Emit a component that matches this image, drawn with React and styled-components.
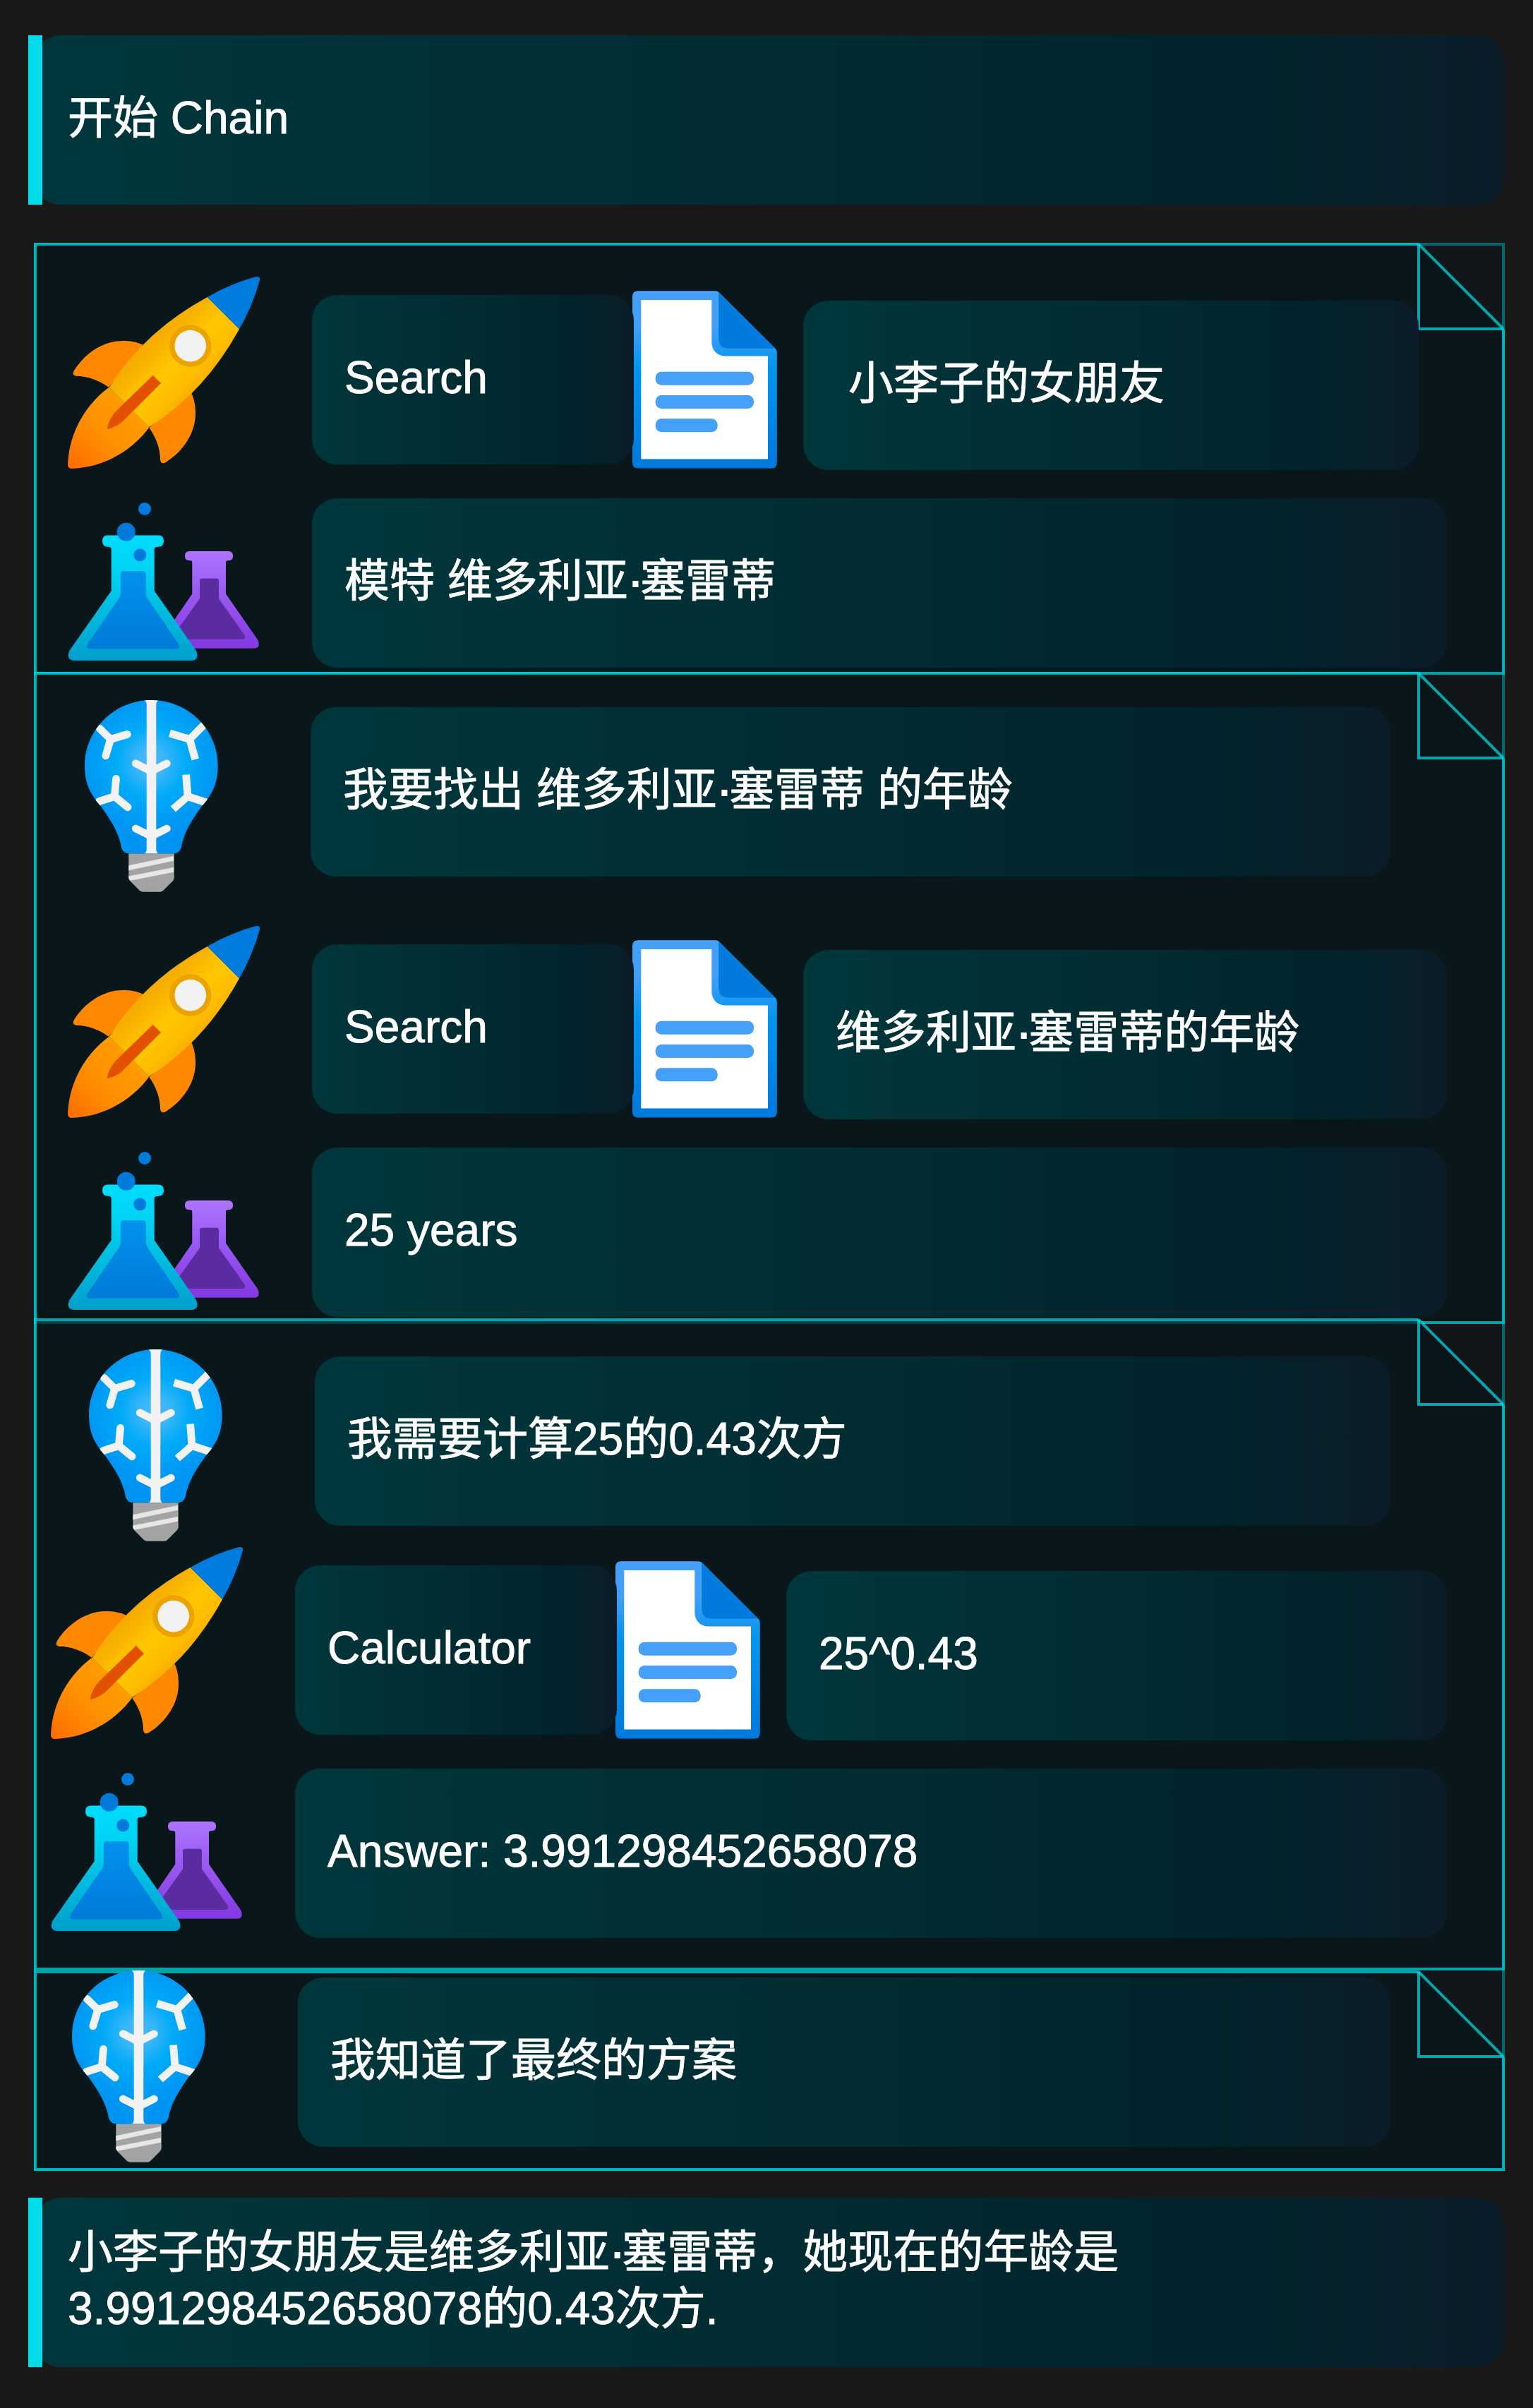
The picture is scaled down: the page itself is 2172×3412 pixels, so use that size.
import React from "react";
import styled, { createGlobalStyle } from "styled-components";

const GlobalStyle = createGlobalStyle`
  body {
    margin: 0;
    background: #191919;
  }
`;

const STROKE = "rgba(0, 221, 232, 0.7)";

const Page = styled.main`
  box-sizing: border-box;
  width: 2172px;
  height: 3412px;
  padding: 50px 42px 58px 50px;
  display: flex;
  flex-direction: column;
  background: #191919;
  color: #fff;
  font-family: "Liberation Sans", Helvetica, "Noto Sans CJK SC", sans-serif;
  font-size: 64px;
  line-height: 80px;
  -webkit-text-stroke: 0.9px #fff;
`;

const Card = styled.div`
  box-sizing: border-box;
  position: relative;
  z-index: 1;
  flex: none;
  display: flex;
  align-items: center;
  width: ${(p) => p.$w}px;
  height: 240px;
  margin-top: ${(p) => p.$drop || 0}px;
  padding: 0 0 ${(p) => p.$lift ?? 7}px ${(p) => p.$pad || 46}px;
  border-radius: 36px;
  background: linear-gradient(90deg, #00373c 0%, #012d33 45%, #02232b 84%, #081f2a 94%, #0b1c29 100%);
  white-space: pre;
`;

const Banner = styled(Card)`
  &::before {
    content: "";
    position: absolute;
    left: -10px;
    top: 0;
    width: 20px;
    height: 100%;
    background: #00dde8;
  }
`;

const Chain = styled.section`
  box-sizing: border-box;
  position: relative;
  width: 2080px;
  height: 2728px;
  margin: 56px 0 40px;
  display: flex;
  flex-direction: column;
  background: #111718;
  &::before {
    content: "";
    position: absolute;
    inset: -2px;
    border: 4px solid #02686e;
  }
`;

const Note = styled.article`
  box-sizing: border-box;
  position: relative;
  flex: none;
  height: ${(p) => p.$h}px;
  margin-top: ${(p) => p.$shift || 0}px;
  padding-top: ${(p) => p.$top}px;
  display: flex;
  flex-direction: column;
  &::before {
    content: "";
    position: absolute;
    inset: 0;
    background: rgba(5, 23, 27, 0.7);
    clip-path: polygon(0 0, calc(100% - 120px) 0, 100% 120px, 100% 100%, 0 100%);
  }
  &::after {
    content: "";
    position: absolute;
    inset: -2px;
    background:
      linear-gradient(${STROKE}, ${STROKE}) 0 0 / calc(100% - 122px) 4px no-repeat,
      linear-gradient(${STROKE}, ${STROKE}) 0 4px / 4px calc(100% - 8px) no-repeat,
      linear-gradient(${STROKE}, ${STROKE}) 100% 100% / 4px calc(100% - 122px) no-repeat,
      linear-gradient(${STROKE}, ${STROKE}) 0 100% / calc(100% - 4px) 4px no-repeat;
  }
`;

const FoldMark = styled.svg`
  position: absolute;
  right: -2px;
  top: -2px;
  width: 124px;
  height: 124px;
  z-index: 0;
`;

const Row = styled.div`
  position: relative;
  z-index: 1;
  flex: none;
  display: flex;
  align-items: flex-start;
  height: ${(p) => p.$h}px;
  margin-top: ${(p) => p.$gap || 0}px;
  padding-left: ${(p) => p.$indent}px;
`;

const Art = styled.svg`
  flex: none;
  display: block;
  overflow: visible;
  width: ${(p) => p.$w}px;
  height: ${(p) => p.$h}px;
  margin: ${(p) => p.$drop || 0}px ${(p) => p.$after || 0}px 0 ${(p) => p.$before || 0}px;
`;

const Line = styled.span`
  display: block;
`;

const Dot = styled.span`
  letter-spacing: -4px;
  -webkit-text-stroke-width: 2px;
`;

const HiddenDefs = styled.svg`
  position: absolute;
`;

function Fold() {
  return (
    <FoldMark viewBox="0 0 124 124">
      <path d="M2 2V122H122Z" fill="rgba(8,20,23,.25)" />
      <path d="M2 2V122H122" fill="none" stroke="#00dde8" strokeOpacity=".72" strokeWidth="4" />
      <path d="M2 2L122 122" fill="none" stroke="#00dde8" strokeOpacity=".72" strokeWidth="4" />
    </FoldMark>
  );
}

function Defs() {
  return (
    <HiddenDefs width="0" height="0">
      <defs>
        <linearGradient id="hull" gradientUnits="userSpaceOnUse" x1="112" y1="80" x2="192" y2="160">
          <stop offset="0" stopColor="#f2a600" />
          <stop offset=".25" stopColor="#f9b400" />
          <stop offset=".52" stopColor="#ffc800" />
          <stop offset=".8" stopColor="#ffbb00" />
          <stop offset="1" stopColor="#f2ab00" />
        </linearGradient>
        <linearGradient id="flame" gradientUnits="userSpaceOnUse" x1="95" y1="175" x2="0" y2="270">
          <stop offset="0" stopColor="#ff9f00" />
          <stop offset=".5" stopColor="#ff9000" />
          <stop offset="1" stopColor="#ff6c00" />
        </linearGradient>
        <linearGradient id="glass" x1="0" y1="0" x2="0" y2="1">
          <stop offset="0" stopColor="#00dcff" />
          <stop offset=".25" stopColor="#00d4f4" />
          <stop offset=".8" stopColor="#00aed6" />
          <stop offset="1" stopColor="#009fca" />
        </linearGradient>
        <linearGradient id="liquid" x1="0" y1="0" x2="0" y2="1">
          <stop offset="0" stopColor="#0092ec" />
          <stop offset="1" stopColor="#007adb" />
        </linearGradient>
        <linearGradient id="violet" x1="0" y1="0" x2="0" y2="1">
          <stop offset="0" stopColor="#ad74ff" />
          <stop offset="1" stopColor="#8338e2" />
        </linearGradient>
        <linearGradient id="paper" x1="0" y1="0" x2="0" y2="1">
          <stop offset="0" stopColor="#45a0f9" />
          <stop offset=".2" stopColor="#449ff8" />
          <stop offset=".44" stopColor="#0095ee" />
          <stop offset="1" stopColor="#0079dd" />
        </linearGradient>
        <radialGradient id="glow" gradientUnits="userSpaceOnUse" cx="94" cy="88" r="98">
          <stop offset="0" stopColor="#48b8f9" />
          <stop offset=".2" stopColor="#3cb6f9" />
          <stop offset=".5" stopColor="#00abf8" />
          <stop offset=".75" stopColor="#00a0f6" />
          <stop offset="1" stopColor="#0095f3" />
        </radialGradient>
        <clipPath id="bulbShape">
          <path d="M94.3 0C42 0 0 42 0 93C0 110 4 124 11 134.500C16 143 19 146 23.300 151C34 166 44 181 49 197C52 205 51 209 54 213Q57 217.300 63 217.300H125.700Q131.700 217.300 134.700 213C137.700 209 136.700 205 139.700 197C144.700 181 154.700 166 165.400 151C169.700 146 172.700 143 177.700 134.500C184.700 124 188.700 110 188.700 93C188.700 42 146.700 0 94.300 0Z" />
        </clipPath>
      </defs>
    </HiddenDefs>
  );
}

function Rocket() {
  return (
    <Art viewBox="0 0 272 272" $w={272} $h={272} $after={74}>
      <path d="M106.700 96.500C96 92 87 91 78 91C50 91 24 109 9 133Q5.500 139.500 11.700 140.800C29 141 44 147 58 156.700Z" fill="#ff8800" />
      <path d="M175.500 165.300C180 176 181 185 181 194C181 222 163 248 139 263Q132.500 266.500 131.200 260.300C131 243 125 228 115.300 214Z" fill="#ff8800" />
      <path d="M58.500 156.700C29 178 2 217 0 266Q0 272 6 272C55 270 94 243 115.300 213.500Z" fill="url(#flame)" />
      <path d="M197.700 28.900Q108 78 58.700 157L115 213.300Q194 164 243.100 74.300Z" fill="url(#hull)" />
      <path d="M197.700 28.900Q231 10 266 .3Q273.500 -1.500 271.700 6Q262 41 243.100 74.300Z" fill="#007bde" />
      <circle cx="173.700" cy="98.100" r="29.700" fill="#eba300" />
      <circle cx="173.700" cy="98.100" r="22.300" fill="#f2f2f2" />
      <path d="M120.700 139.800L132 151L82 201Q71 213 55.700 216.300Q58 201 69 190Z" fill="#e35000" />
    </Art>
  );
}

function Flasks() {
  return (
    <Art viewBox="0 0 272 224" $w={272} $h={224} $drop={6} $after={74}>
      <path d="M172.500 69.100H227.500Q234 69.100 234 75.650T227.500 82.200Q224 82.200 224 84.500V129.600L269.500 195Q273.500 206.700 264 206.700H136Q127 206.700 130.500 196L176.300 129.600V84.500Q176.300 82.200 172.500 82.200Q166 82.200 166 75.650T172.500 69.100Z" fill="url(#violet)" />
      <path d="M190 107.800H211Q214 107.800 214 111V136.300L250.500 188Q252.500 194 247.500 194H152.500Q147.500 194 150 188L187 136.300V111Q187 107.800 190 107.800Z" fill="#5b2c9f" />
      <path d="M57 46.600H128Q136 46.600 136 54.700T128 62.800Q122.700 62.800 122.700 66V125.300L182 210Q187 224 175 224H9.500Q-3 224 2.300 210L61.700 125.300V66Q61.700 62.800 57 62.800Q49 62.800 49 54.700T57 46.600Z" fill="url(#glass)" />
      <path d="M79 97.200H106.500Q110.700 97.200 110.700 101.500V129Q110.700 132.500 112.500 135L157 200.500Q160 207.500 154 207.500H31Q25 207.500 28 200.500L73 135Q75 132 75 129V101.500Q75 97.200 79 97.200Z" fill="url(#liquid)" />
      <circle cx="109" cy="9" r="9" fill="#007bdc" />
      <circle cx="82.700" cy="41.800" r="13" fill="#007bdc" />
      <circle cx="102.300" cy="74.300" r="9" fill="#007bdc" />
    </Art>
  );
}

function Bulb() {
  return (
    <Art viewBox="0 0 189 272" $w={189} $h={272} $after={131}>
      <path d="M62.300 217.300H126.700V252Q126.700 254 125 256L111 270Q109.500 271.700 107 271.700H82.500Q80 271.700 78 270L64 256Q62.300 254 62.300 252Z" fill="#a3a3a3" />
      <path d="M62.300 234.300L126 221V227.800L62.300 241.200ZM62.300 249.500L126 237V243.800L65 255.700Q62.300 253.500 62.300 252Z" fill="#e6e6e6" />
      <g clipPath="url(#bulbShape)">
        <rect width="189" height="218" fill="url(#glow)" />
        <path d="M84 0H105Q101.300 2 101.300 6V211Q101.300 216 105 218H84Q87.700 216 87.700 211V6Q87.700 2 84 0Z" fill="#f2f2f2" />
        <g fill="none" stroke="#f2f2f2" strokeWidth="10.800" strokeLinecap="round">
          <path d="M72.300 89.800L94.300 101L116.300 89.800M72.300 182L94.300 193L116.300 182" />
          <path d="M36.700 55.500L21.500 40.500M36.700 55.500L60.300 48.500M36.700 55.500L29.800 78.800" />
          <path d="M42.300 136.500L44.500 111.500M42.300 136.500L20.500 143.500M42.300 136.500L61 151.800" />
        </g>
        <g fill="none" stroke="#f2f2f2" strokeWidth="10.800">
          <path d="M171 33L148.700 55.500L120.500 47M148.700 55.500L156.700 84" />
          <path d="M143.600 105.700L146 136.500L125.200 154.500M146 136.500L175 146" />
        </g>
      </g>
    </Art>
  );
}

function Document() {
  return (
    <Art viewBox="0 0 205 252" $w={205} $h={252} $drop={20} $before={-2} $after={37}>
      <path d="M8 .3H117.500Q121 .3 123.500 3L202.300 81.500Q204.800 84 204.800 87V243.500Q204.800 251.500 197 251.500H8Q0 251.500 0 243.500V8.300Q0 .3 8 .3Z" fill="url(#paper)" />
      <path d="M12.300 13H112.300V72.500C112.300 84 120 92.500 132 92.500H192V238.500H12.300Z" fill="#fff" />
      <path d="M122.200 2V67.500Q122.200 81.700 137 81.700H202.300Z" fill="#007bdd" />
      <g fill="#44a0f8">
        <rect x="32.700" y="114.700" width="139.300" height="19" rx="8.500" />
        <rect x="32.700" y="148" width="139.300" height="19" rx="8.500" />
        <rect x="32.700" y="181.300" width="88" height="19" rx="8.500" />
      </g>
    </Art>
  );
}

function Name() {
  return (
    <span>维多利亚<Dot>·</Dot>塞雷蒂</span>
  );
}

function Thought({ indent, gap, width, children }) {
  return (
    <Row $h={272} $indent={indent} $gap={gap}>
      <Bulb />
      <Card $w={width} $drop={10}><span>{children}</span></Card>
    </Row>
  );
}

function Action({ indent, gap, tool, input, inputWidth, inputPad }) {
  return (
    <Row $h={272} $indent={indent} $gap={gap}>
      <Rocket />
      <Card $w={456} $drop={26}>{tool}</Card>
      <Document />
      <Card $w={inputWidth} $drop={34} $pad={inputPad}><span>{input}</span></Card>
    </Row>
  );
}

function Result({ indent, width, children }) {
  return (
    <Row $h={240} $indent={indent} $gap={42}>
      <Flasks />
      <Card $w={width}><span>{children}</span></Card>
    </Row>
  );
}

export default function App() {
  return (
    <Page>
      <GlobalStyle />
      <Defs />
      <Banner $w={2080}>开始 Chain</Banner>
      <Chain>
        <Note $h={608} $top={46}>
          <Fold />
          <Action indent={46} tool="Search" input="小李子的女朋友" inputWidth={872} inputPad={64} />
          <Result indent={46} width={1608}>模特 <Name /></Result>
        </Note>
        <Note $h={920} $top={38}>
          <Fold />
          <Thought indent={70} width={1530}>我要找出 <Name /> 的年龄</Thought>
          <Action indent={46} gap={48} tool="Search" input={<><Name />的年龄</>} inputWidth={912} />
          <Result indent={46} width={1608}>25 years</Result>
        </Note>
        <Note $h={920} $top={42} $shift={-4}>
          <Fold />
          <Thought indent={76} width={1524}>我需要计算25的0.43次方</Thought>
          <Action indent={22} gap={8} tool="Calculator" input="25^0.43" inputWidth={936} />
          <Result indent={22} width={1632}>Answer: 3.991298452658078</Result>
        </Note>
        <Note $h={280} $top={0} $shift={4}>
          <Fold />
          <Thought indent={52} gap={-2} width={1548}>我知道了最终的方案</Thought>
        </Note>
      </Chain>
      <Banner $w={2080}>
        <div>
          <Line>小李子的女朋友是<Name />，她现在的年龄是</Line>
          <Line>3.991298452658078的0.43次方.</Line>
        </div>
      </Banner>
    </Page>
  );
}
